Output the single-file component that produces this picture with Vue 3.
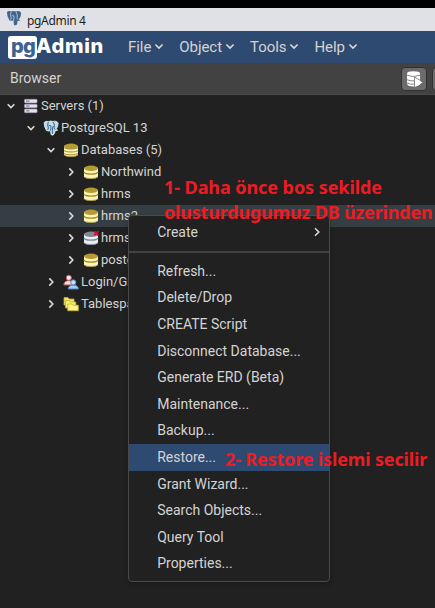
<script setup>
const menus = ['File', 'Object', 'Tools', 'Help']
const rows = [
  { label: 'Servers (1)', level: 0, icon: 'servers', open: true },
  { label: 'PostgreSQL 13', level: 1, icon: 'elephant', open: true },
  { label: 'Databases (5)', level: 2, icon: 'databases', open: true },
  { label: 'Northwind', level: 3, icon: 'db' },
  { label: 'hrms', level: 3, icon: 'db' },
  { label: 'hrms2', level: 3, icon: 'db', selected: true },
  { label: 'hrms3', level: 3, icon: 'off' },
  { label: 'postgres', level: 3, icon: 'db' },
  { label: 'Login/Group Roles', level: 2, icon: 'roles' },
  { label: 'Tablespaces', level: 2, icon: 'folders' },
]
const actions = [
  'Refresh...', 'Delete/Drop', 'CREATE Script', 'Disconnect Database...',
  'Generate ERD (Beta)', 'Maintenance...', 'Backup...', 'Restore...',
  'Grant Wizard...', 'Search Objects...', 'Query Tool', 'Properties...',
]
</script>

<template>
  <div class="app">
    <header class="titlebar">
      <svg class="title-icon" viewBox="0 0 16 16">
        <path d="M1 2Q3 .5 5 1.5Q8 .3 10 1.5Q14 .2 15.2 3Q15 7 12.8 9.5L14.5 10.2L12 11L11.4 11L11.2 14Q10 16 8 15L7.5 10.5L5.5 10.8L3.5 10.5Q.6 6 1 2Z" fill="#40658f" />
        <path d="M5 2Q4 5 5.2 8L4.7 9.7M10 2Q12 4.5 11 8L12 9.5M6.2 5.5Q8.5 5 8 8L7.4 10.8" fill="none" stroke="#cbd3df" stroke-width=".8" />
      </svg>
      <span>pgAdmin 4</span>
    </header>

    <nav class="menubar">
      <div class="logo"><span class="pg">pg</span><span class="admin">Admin</span></div>
      <div v-for="m in menus" :key="m" class="menu">
        <span>{{ m }}</span>
        <svg viewBox="0 0 10 8"><path d="M1.4 1.5L5 5.1L8.6 1.5" /></svg>
      </div>
    </nav>

    <div class="panel-head">
      <span>Browser</span>
      <div class="toolbar">
        <div class="tool">
          <svg viewBox="0 0 18 18">
            <path d="M2 3.5Q2 1.2 8.5 1.2T15 3.5V14Q14 16.5 8.5 16.5T2 14Z" fill="#fff" />
            <path d="M2 5.2Q8 8 15 5.2M2 9.7Q6 11.5 9.5 10.8M2 13Q6 15 9.5 14M9.6 17V7.2L17 11.4M15.6 5V10" fill="none" stroke="#777" stroke-width=".9" />
            <path d="M10.2 8.2L17.5 12.6L10.2 17Z" fill="#fff" />
          </svg>
        </div>
        <div class="tool"></div>
      </div>
    </div>

    <main class="tree">
      <div v-for="r in rows" :key="r.label" class="row" :class="['level' + r.level, { selected: r.selected }]">
        <svg class="chevron" viewBox="0 0 10 10">
          <path :d="r.open ? 'M1.7 3.2L5 6.5L8.3 3.2' : 'M3.3 1.4L6.8 5L3.3 8.6'" />
        </svg>
        <svg class="icon" viewBox="0 0 16 16">
          <template v-if="r.icon === 'servers'">
            <g fill="#e5e1ef" stroke="#9c94ad" stroke-width=".6">
              <rect x="1.5" y="1.3" width="12.6" height="3.6" rx=".8" />
              <rect x="1.5" y="6.2" width="12.6" height="3.6" rx=".8" />
              <rect x="1.5" y="11.1" width="12.6" height="3.6" rx=".8" />
            </g>
            <path d="M3 3.1H6.5M3 8H6.5M3 12.9H6.5" stroke="#716b83" stroke-width="1" />
          </template>
          <template v-else-if="r.icon === 'elephant'">
            <path d="M1.2 2.4Q3 .6 5.3 1.6Q8 .5 10 1.5Q14 .3 15.2 3.3Q15 7 12.8 9.5L14.7 10L12 11.2L11.2 14Q10 16 8 14.6L7.6 10.8L5.5 11L3.5 10.6Q.6 6 1.2 2.4Z" fill="#bcdcf0" stroke="#e1edf5" stroke-width=".8" />
            <path d="M5.3 2Q4 5 5.4 8L4.7 10M10 2Q12.4 4.5 11 8L12.3 9.8M5.8 5.3Q8.4 4.8 8 8L7.4 10.7M10.6 6Q9.2 6.5 9.4 10.3V14" fill="none" stroke="#315572" stroke-width=".9" />
          </template>
          <template v-else-if="r.icon === 'roles'">
            <path d="M.8 11Q1 6.8 5.8 6.5Q10.2 6.8 10.5 11Z" fill="#f8dddd" stroke="#b85459" />
            <circle cx="5.8" cy="3.8" r="2.6" fill="#fff0ec" stroke="#b85459" />
            <path d="M5.2 15Q5.4 11.2 10.3 10.9Q15.2 11.2 15.5 15Z" fill="#a8cdf5" stroke="#527fbd" />
            <circle cx="10.3" cy="8.4" r="2.6" fill="#c9e0fa" stroke="#527fbd" />
          </template>
          <template v-else-if="r.icon === 'folders'">
            <g stroke="#c6ad27" stroke-width=".8">
              <path d="M1 1.5H5L6 3H11V9H1Z" fill="#eee66d" />
              <path d="M2.5 4.5H6.5L7.5 6H12.8V12H2.5Z" fill="#f5ef7b" />
              <path d="M4.7 8H9L10 9.2H15.3V14.7H4.7Z" fill="#f9f38c" />
            </g>
          </template>
          <template v-else>
            <path d="M1 4V12.4C1 15.4 15 15.4 15 12.4V4Z" :fill="r.icon === 'off' ? '#e9edf2' : '#fbf5b9'" />
            <ellipse cx="8" cy="4.3" rx="7" ry="2.7" :fill="r.icon === 'off' ? '#7f8996' : '#b59c32'" />
            <path v-if="r.icon === 'databases'" d="M1 5.4C2 7.5 14 7.5 15 5.4M1 8.4C2 10.5 14 10.5 15 8.4M1 11.2C2 13.3 14 13.3 15 11.2" fill="none" stroke="#a38b25" stroke-width="1" />
            <path v-else d="M1 8C2 10.8 14 10.8 15 8" fill="none" :stroke="r.icon === 'off' ? '#7f8996' : '#a68e26'" stroke-width="1.3" />
            <path d="M1 12.5C2 15.1 14 15.1 15 12.5" fill="none" :stroke="r.icon === 'off' ? '#7f8996' : '#a68e26'" stroke-width=".7" />
            <path v-if="r.icon === 'off'" d="M11.2 1.2L15.3 5.3M15.3 1.2L11.2 5.3" stroke="#d3102f" stroke-width="1.9" />
          </template>
        </svg>
        <span class="label">{{ r.label }}</span>
      </div>
    </main>

    <div class="context">
      <div class="action create">
        <span>Create</span>
        <svg viewBox="0 0 10 10"><path d="M3 1.3L6.8 5L3 8.7" /></svg>
      </div>
      <div class="divider"></div>
      <div v-for="a in actions" :key="a" class="action" :class="{ active: a === 'Restore...' }">{{ a }}</div>
    </div>

    <div class="note first"><span>1- Daha önce bos sekilde</span><span class="tight">olusturdugumuz DB üzerinden</span></div>
    <div class="note second">2- Restore islemi secilir</div>
  </div>
</template>

<style>
body { margin: 0; background: #212121; }
</style>

<style scoped>
.app { position: relative; box-sizing: border-box; width: 435px; height: 608px; padding-top: 8px; overflow: hidden; background: #212121; color: #d4d4d4; font-family: Roboto, sans-serif; box-shadow: inset 0 8px #000; }
.titlebar { display: flex; align-items: center; height: 23px; padding-left: 6px; gap: 5px; background: #e0e1e6; color: #1c1c1c; font: 12px "Noto Sans", sans-serif; letter-spacing: -.32px; }
.titlebar span { padding-top: 1px; }
.title-icon { width: 16px; height: 16px; margin-top: -3px; }
.menubar { display: flex; align-items: center; height: 32px; background: #2f4a70; font-size: 15px; }
.logo { display: flex; align-items: center; width: 97px; margin-left: 8px; margin-right: 23px; font: 800 20px/23px Inter, sans-serif; color: #fff; }
.pg { display: block; box-sizing: border-box; flex: none; width: 29px; height: 23px; padding-left: 3px; border-radius: 3px; background: #fff; color: #3f618d; line-height: 20px; letter-spacing: -.8px; }
.admin { margin-top: -2px; margin-left: -1px; line-height: 22px; letter-spacing: .7px; }
.menu { display: flex; align-items: center; gap: 3px; margin-right: 15px; white-space: nowrap; letter-spacing: -.06px; }
.menu svg { width: 10px; height: 8px; }
.menu path, .chevron path, .create path { fill: none; stroke: #dadada; stroke-width: 1.6; }
.panel-head { display: flex; justify-content: space-between; align-items: center; box-sizing: border-box; height: 32px; padding-left: 10px; border-bottom: 1px solid #4a4a4a; background: #424242; font-size: 14px; }
.panel-head > span { margin-top: -2px; }
.toolbar { display: flex; gap: 5px; width: 34px; height: 24px; overflow: hidden; }
.tool { flex: 0 0 26px; display: flex; justify-content: center; align-items: center; box-sizing: border-box; height: 24px; border: 1px solid #303030; border-radius: 4px; background: #6b6b6b; }
.tool svg { width: 18px; height: 18px; }
.row { display: flex; align-items: center; height: 22px; padding-left: 6px; font-size: 13px; white-space: nowrap; }
.row.level1 { padding-left: 26px; }
.row.level2 { padding-left: 46px; }
.row.level3 { padding-left: 66px; }
.row.selected { background: #353e43; }
.label { margin-top: -2px; }
.chevron { width: 10px; height: 10px; margin: 0 7px 1px 0; }
.icon { width: 16px; height: 16px; margin-right: 2px; }
.context { position: absolute; left: 128px; top: 215px; box-sizing: border-box; width: 202px; height: 367px; padding-top: 3px; border: 1px solid #4a4a4a; border-radius: 4px; background: #212121; box-shadow: 0 3px 5px #0003; font-size: 14px; }
.action { height: 26.6px; padding-left: 28.2px; line-height: 26px; white-space: nowrap; }
.action.active { background: #2f4a70; }
.create { display: flex; align-items: center; justify-content: space-between; height: 25px; padding-right: 7px; }
.create svg { width: 10px; height: 10px; }
.divider { height: 2px; margin: 7px 0 4.85px; background: #424242; }
.note { position: absolute; color: #ed1c24; font: 700 18px/25px "Noto Sans", sans-serif; white-space: nowrap; letter-spacing: -.07px; }
.note span { display: block; }
.note .tight { letter-spacing: -.19px; }
.first { left: 164px; top: 175px; }
.second { left: 225px; top: 447px; letter-spacing: -.15px; }
</style>
